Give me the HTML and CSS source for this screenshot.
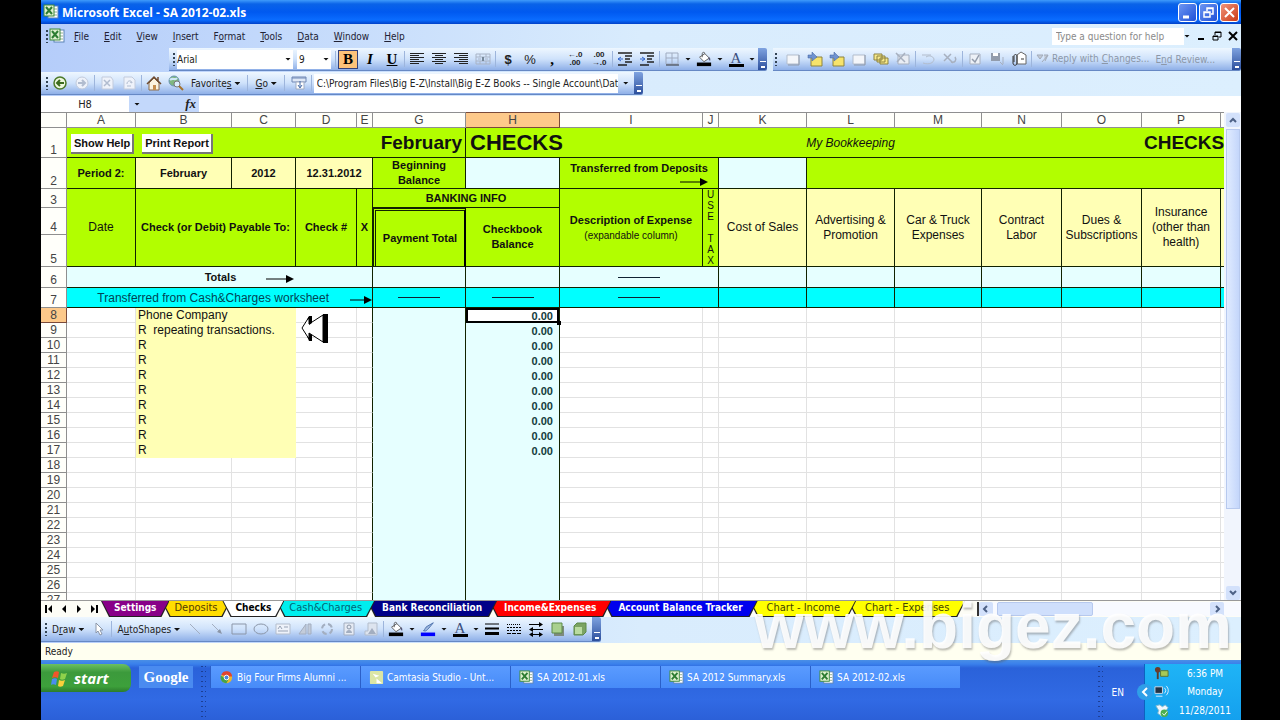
FILE: index.html
```html
<!DOCTYPE html>
<html lang="en">
  <head>
    <meta charset="utf-8" />
    <meta name="viewport" content="width=device-width, initial-scale=1.0" />
    <title>Microsoft Excel - SA 2012-02.xls</title>
    <link rel="stylesheet" href="styles.css">
  </head>
  <body>
    <svg class="symbols" aria-hidden="true">
      <symbol id="excel" viewBox="0 0 16 16">
        <rect x="5" y="2" width="10" height="12" fill="#fff" stroke="#5b83b5" />
        <path d="M11 5h3M11 8h3M11 11h3" stroke="#8fae8f" />
        <rect x="1" y="1" width="10" height="11" fill="#dff0cf" stroke="#3c8a3c" />
        <path d="M3 3l6 7M9 3l-6 7" stroke="#2d7d32" stroke-width="2" />
      </symbol>
      <symbol id="bucket" viewBox="0 0 18 16">
        <path d="M4 6l6-4 5 5-6 4z" fill="#fff" stroke="#555" />
        <path d="M7 6V2c0-2 3-2 3 0" fill="none" stroke="#555" />
        <path d="M14 6c3 1 2 3 2 4-1 0-2-2-2-4z" fill="#557" />
        <rect x="1" y="12" width="16" height="4" />
      </symbol>
      <symbol id="note" viewBox="0 0 16 16">
        <path d="M2 4h12v9H2z" fill="#f4f6fa" stroke="#b3bdcc" />
        <path d="M14 4v10H3" fill="none" stroke="#8f99aa" />
      </symbol>
      <symbol id="notes" viewBox="0 0 16 16">
        <path d="M4 6h11v9H4z" fill="#f7e36b" stroke="#8d8340" />
        <path d="M1 4h4V1l5 5-5 4V7H1z" fill="#6f92cf" stroke="#3c5f9f" stroke-width=".5" />
      </symbol>
    </svg>

    <div class="screen">
      <header class="titlebar">
        <svg class="icon"><use href="#excel" /></svg>
        <h1>Microsoft Excel - SA 2012-02.xls</h1>
        <button class="win" aria-label="Minimize"><svg viewBox="0 0 17 17"><path d="M4 13h6" stroke="#fff" stroke-width="3" /></svg></button>
        <button class="win" aria-label="Restore"><svg viewBox="0 0 17 17"><path d="M4 8h6v5H4zM4 8.500h6M7 7V4h6v6h-2M7 4.500h6" fill="none" stroke="#fff" stroke-width="1.500" /></svg></button>
        <button class="win close" aria-label="Close"><svg viewBox="0 0 17 17"><path d="M4 4l9 9M13 4l-9 9" stroke="#fff" stroke-width="2" /></svg></button>
      </header>

      <nav class="menubar">
        <i class="grip"></i>
        <svg class="icon"><use href="#excel" /></svg>
        <a href="#"><u>F</u>ile</a>
        <a href="#"><u>E</u>dit</a>
        <a href="#"><u>V</u>iew</a>
        <a href="#"><u>I</u>nsert</a>
        <a href="#">F<u>o</u>rmat</a>
        <a href="#"><u>T</u>ools</a>
        <a href="#"><u>D</u>ata</a>
        <a href="#"><u>W</u>indow</a>
        <a href="#"><u>H</u>elp</a>
        <input class="question" type="text" aria-label="Ask" placeholder="Type a question for help" />
        <i class="arrow"></i>
        <button class="mini" aria-label="Minimize workbook"><svg viewBox="0 0 10 10"><path d="M2 8h6" stroke="#000" stroke-width="2" /></svg></button>
        <button class="mini" aria-label="Restore workbook"><svg viewBox="0 0 10 10"><path d="M1 5h5v4H1zM1 5.500h5M3 4V1h6v5H7M3 1.500h6" fill="none" stroke="#000" /></svg></button>
        <button class="mini" aria-label="Close workbook"><svg viewBox="0 0 10 10"><path d="M1 1l8 8M9 1l-8 8" stroke="#000" stroke-width="2" /></svg></button>
      </nav>

      <div class="toolrow formatting">
        <div class="toolbar">
          <i class="grip"></i>
          <span class="combo font"><select aria-label="Font"><option>Arial</option></select></span>
          <span class="combo size"><select aria-label="Font size"><option>9</option></select></span>
          <i class="sep"></i>
          <button class="tool serif on"><b>B</b></button>
          <button class="tool serif"><b><i>I</i></b></button>
          <button class="tool serif"><b><u>U</u></b></button>
          <i class="sep"></i>
          <button class="tool lines" aria-label="Align left"><svg viewBox="0 0 16 16"><path d="M1 2h14M1 4h9M1 6h14M1 8h9M1 10h14M1 12h9" stroke="#222" /></svg></button>
          <button class="tool lines" aria-label="Center"><svg viewBox="0 0 16 16"><path d="M1 2h14M4 4h8M1 6h14M4 8h8M1 10h14M4 12h8" stroke="#222" /></svg></button>
          <button class="tool lines" aria-label="Align right"><svg viewBox="0 0 16 16"><path d="M1 2h14M6 4h9M1 6h14M6 8h9M1 10h14M6 12h9" stroke="#222" /></svg></button>
          <button class="tool" aria-label="Merge and center"><svg viewBox="0 0 16 16"><path d="M1 3h14v10H1zM1 6h14M1 10h14M5 3v3M11 3v3M5 10v3M11 10v3M3 8h3M10 8h3" fill="none" stroke="#a9b4c6" /><path d="M8 6v4" stroke="#789" stroke-width="2" /></svg></button>
          <i class="sep"></i>
          <button class="tool"><b>$</b></button>
          <button class="tool">%</button>
          <button class="tool serif"><b>,</b></button>
          <button class="tool dec">←.0<br />.00</button>
          <button class="tool dec">.00<br />→.0</button>
          <i class="sep"></i>
          <button class="tool" aria-label="Decrease indent"><svg viewBox="0 0 16 16"><path d="M1 2h14M8 5h7M8 8h5M8 11h7M1 14h9" stroke="#222" stroke-width="1.500" /><path d="M6 8H1M4 6L1 8l3 2" fill="none" stroke="#36c" /></svg></button>
          <button class="tool" aria-label="Increase indent"><svg viewBox="0 0 16 16"><path d="M1 2h14M8 5h7M8 8h5M8 11h7M1 14h9" stroke="#222" stroke-width="1.500" /><path d="M1 8h5M3 6l3 2-3 2" fill="none" stroke="#36c" /></svg></button>
          <i class="sep"></i>
          <button class="tool" aria-label="Borders"><svg viewBox="0 0 16 16"><path d="M2 2h12v11H2zM8 2v11M2 7h12" fill="none" stroke="#9fabc0" /><path d="M2 14h13" stroke="#333" /></svg></button>
          <i class="arrow"></i>
          <button class="tool" aria-label="Fill color"><svg><use href="#bucket" /></svg></button>
          <i class="arrow"></i>
          <button class="tool letter">A</button>
          <i class="arrow"></i>
          <i class="cap"></i>
        </div>
        <div class="toolbar reviewing">
          <i class="grip"></i>
          <button class="tool" aria-label="New comment"><svg><use href="#note" /></svg></button>
          <button class="tool" aria-label="Previous comment"><svg><use href="#notes" /></svg></button>
          <button class="tool" aria-label="Next comment"><svg><use href="#notes" /></svg></button>
          <button class="tool" aria-label="Show comment"><svg><use href="#note" /></svg></button>
          <button class="tool" aria-label="Show all comments"><svg viewBox="0 0 16 16"><path d="M1 3h8v6H1zM4 5h8v6H4zM7 7h8v6H7z" fill="#f7e98a" stroke="#8d8340" /></svg></button>
          <button class="tool" aria-label="Delete comment"><svg viewBox="0 0 16 16"><path d="M3 4h11v9H3z" fill="#e9edf4" stroke="#a7b0bf" /><path d="M1 2l9 9M10 2l-8 9" stroke="#a7b0bf" stroke-width="1.500" /></svg></button>
          <i class="sep"></i>
          <button class="tool" aria-label="Ink"><svg viewBox="0 0 16 16"><path d="M2 4h9M3 12c6 2 11 0 11-4-1-3-5-4-8-2" fill="none" stroke="#b3bdcc" /></svg></button>
          <button class="tool" aria-label="Erase ink"><svg viewBox="0 0 16 16"><path d="M2 3l9 9M9 3l-7 7M9 11c4 1 6-2 4-5" fill="none" stroke="#a7b0bf" stroke-width="1.500" /></svg></button>
          <i class="sep"></i>
          <button class="tool" aria-label="Create task"><svg viewBox="0 0 16 16"><path d="M3 3h10v10H3z" fill="#edf1f7" stroke="#a7b0bf" /><path d="M5 8l3 3 4-7" fill="none" stroke="#929cac" stroke-width="1.500" /></svg></button>
          <button class="tool" aria-label="Update file"><svg viewBox="0 0 16 16"><path d="M2 2h9v8H2z" fill="#929cac" /><path d="M4 2h5v3H4z" fill="#fff" /><path d="M14 6v7M11 11l3 3" stroke="#a7b0bf" /></svg></button>
          <button class="tool" aria-label="Send as attachment"><svg viewBox="0 0 16 16"><path d="M6 4l4-3 5 3v9H6z" fill="#fff" stroke="#666" /><path d="M2 5v7c0 3 4 3 4 0V5c0-2-3-2-3 0v6M10 8h3" fill="none" stroke="#333" /></svg></button>
          <i class="sep"></i>
          <button class="text" disabled><svg class="flag" viewBox="0 0 14 12"><path d="M1 2h6L4 6zM6 9l6-7M8 2h4l-3 6" fill="#c3cad6" stroke="#a2abb9" /></svg>Reply with <u>C</u>hanges...</button>
          <button class="text" disabled>E<u>n</u>d Review...</button>
          <i class="cap"></i>
        </div>
      </div>

      <div class="toolrow web">
        <div class="toolbar">
          <i class="grip"></i>
          <button class="tool" aria-label="Back"><svg viewBox="0 0 16 16"><circle cx="8" cy="8" r="6" fill="#eef8df" stroke="#4c7a2a" stroke-width="1.500" /><path d="M12 8H5M8 5L5 8l3 3" fill="none" stroke="#3b6b1d" stroke-width="2" /></svg></button>
          <button class="tool" aria-label="Forward"><svg viewBox="0 0 16 16"><circle cx="8" cy="8" r="6" fill="#eef2fa" stroke="#c2cbdc" /><path d="M4 8h7M8 5l3 3-3 3" fill="none" stroke="#b1bccf" stroke-width="2" /></svg></button>
          <i class="sep"></i>
          <button class="tool" aria-label="Stop"><svg viewBox="0 0 16 16"><path d="M3 2h9l2 3v9H3z" fill="#eef2fa" stroke="#c2cbdc" /><path d="M5 5l6 6M11 5l-6 6" stroke="#b1bccf" stroke-width="1.500" /></svg></button>
          <button class="tool" aria-label="Refresh"><svg viewBox="0 0 16 16"><path d="M3 2h8l3 3v9H3z" fill="#eef2fa" stroke="#c2cbdc" /><path d="M6 9c0-4 5-4 5-1M11 8l-2-1M10 11H6" fill="none" stroke="#b1bccf" /></svg></button>
          <i class="sep"></i>
          <button class="tool" aria-label="Home"><svg viewBox="0 0 16 16"><path d="M3 8v7h10V8L8 3z" fill="#fbf3df" stroke="#8a6a4a" /><path d="M1 9l7-7 7 7M12 2v4" fill="none" stroke="#6d4a2f" stroke-width="1.500" /><path d="M7 10h3v5H7z" fill="#c58e4e" /></svg></button>
          <button class="tool" aria-label="Search the web"><svg viewBox="0 0 16 16"><circle cx="6" cy="6" r="5" fill="#7fb77f" stroke="#6a95b5" /><path d="M2 5c3-3 5 1 7-2" stroke="#cfe8f7" fill="none" stroke-width="2" /><circle cx="9" cy="9" r="3" fill="#dbeeff" stroke="#777" /><path d="M11 11l4 4" stroke="#a5722d" stroke-width="2" /></svg></button>
          <button class="text">Favorite<u>s</u> <i class="arrow"></i></button>
          <i class="sep"></i>
          <button class="text"><u>G</u>o <i class="arrow"></i></button>
          <i class="sep"></i>
          <button class="tool" aria-label="Show only web toolbar"><svg viewBox="0 0 16 16"><path d="M1 2h14v5H1z" fill="#dfe8f6" stroke="#6f87b5" /><path d="M1 3h14" stroke="#6f87b5" /><path d="M5 7h8v7H5z" fill="#fff" stroke="#9fabc0" /><path d="M9 6v6M7 10l2 3 2-3" fill="none" stroke="#456ba8" /></svg></button>
          <i class="sep"></i>
          <input class="address" type="text" aria-label="Address" value="C:\Program Files\Big E-Z\Install\Big E-Z Books -- Single Account\Dat" />
          <i class="arrow"></i>
          <i class="cap"></i>
        </div>
      </div>

      <div class="formulabar">
        <input class="namebox" type="text" aria-label="Name box" value="H8" />
        <div class="fx"><i class="arrow"></i><em>fx</em></div>
        <input class="formula" type="text" aria-label="Formula" />
      </div>

      <main class="book">
        <div class="pane">
          <table class="sheet">
            <colgroup>
              <col class="w26" /><col class="w69" /><col class="w96" /><col class="w64" /><col class="w61" /><col class="w16" /><col class="w93" /><col class="w94" /><col class="w143" /><col class="w16" /><col class="w88" /><col class="w88" /><col class="w87" /><col class="w80" /><col class="w80" /><col class="w79" /><col class="w80" />
            </colgroup>
            <thead>
              <tr>
                <th></th><th>A</th><th>B</th><th>C</th><th>D</th><th>E</th><th>G</th><th class="current">H</th><th>I</th><th>J</th><th>K</th><th>L</th><th>M</th><th>N</th><th>O</th><th>P</th><th></th>
              </tr>
            </thead>
            <tbody id="rows">
              <tr class="r1 lime">
                <th>1</th>
                <td colspan="5" class="macros"><button>Show Help</button><button>Print Report</button></td>
                <td class="month edge">February</td>
                <td class="heading">CHECKS</td>
                <td></td>
                <td></td>
                <td colspan="3" class="company">My Bookkeeping</td>
                <td></td>
                <td></td>
                <td colspan="2" class="heading repeat">CHECKS</td>
              </tr>
              <tr class="r2 lime boxed">
                <th>2</th>
                <td><b>Period 2:</b></td>
                <td class="cream"><b>February</b></td>
                <td class="cream"><b>2012</b></td>
                <td colspan="2" class="cream"><b>12.31.2012</b></td>
                <td><b>Beginning<br />Balance</b></td>
                <td class="azure"></td>
                <td colspan="2" class="deposits"><b>Transferred from Deposits</b><svg class="pointer" viewBox="0 0 28 8"><path d="M0 4h21" stroke="#000" /><path d="M20 0l8 4-8 4z" /></svg></td>
                <td class="azure"></td>
                <td colspan="6"></td>
              </tr>
              <tr class="r3 lime boxed">
                <th>3</th>
                <td rowspan="3">Date</td>
                <td rowspan="3" colspan="2"><b>Check (or Debit) Payable To:</b></td>
                <td rowspan="3"><b>Check #</b></td>
                <td rowspan="3"><b>X</b></td>
                <td colspan="2"><b>BANKING INFO</b></td>
                <td rowspan="3"><b>Description of Expense</b><br /><small>(expandable column)</small></td>
                <td rowspan="3" class="usetax">U<br />S<br />E<br /><br />T<br />A<br />X</td>
                <td rowspan="3" class="cream">Cost of Sales</td>
                <td rowspan="3" class="cream">Advertising &amp;<br />Promotion</td>
                <td rowspan="3" class="cream">Car &amp; Truck<br />Expenses</td>
                <td rowspan="3" class="cream">Contract<br />Labor</td>
                <td rowspan="3" class="cream">Dues &amp;<br />Subscriptions</td>
                <td rowspan="3" class="cream">Insurance<br />(other than<br />health)</td>
                <td rowspan="3" class="cream"></td>
              </tr>
              <tr class="r4 lime boxed">
                <th>4</th>
                <td rowspan="2" class="double"><b>Payment Total</b></td>
                <td rowspan="2"><b>Checkbook<br />Balance</b></td>
              </tr>
              <tr class="r5">
                <th>5</th>
              </tr>
              <tr class="r6 azure boxed">
                <th>6</th>
                <td colspan="5" class="totals"><b>Totals</b><svg class="pointer" viewBox="0 0 28 8"><path d="M0 4h21" stroke="#000" /><path d="M20 0l8 4-8 4z" /></svg></td>
                <td></td>
                <td></td>
                <td colspan="2"><i class="dash"></i></td>
                <td></td><td></td><td></td><td></td><td></td><td></td><td></td>
              </tr>
              <tr class="r7 cyan boxed">
                <th>7</th>
                <td colspan="5" class="charges">Transferred from Cash&amp;Charges worksheet<svg class="pointer" viewBox="0 0 22 8"><path d="M0 4h15" stroke="#000" /><path d="M14 0l8 4-8 4z" /></svg></td>
                <td><i class="dash"></i></td>
                <td><i class="dash"></i></td>
                <td colspan="2"><i class="dash"></i></td>
                <td></td><td></td><td></td><td></td><td></td><td></td><td></td>
              </tr>
            </tbody>
          </table>
        </div>
        <div class="vscroll">
          <button aria-label="Scroll up"><svg viewBox="0 0 14 14"><path d="M4 9l3-3 3 3" fill="none" stroke="#4d6185" stroke-width="2" /></svg></button>
          <i class="thumb"></i>
          <button aria-label="Scroll down"><svg viewBox="0 0 14 14"><path d="M4 5l3 3 3-3" fill="none" stroke="#4d6185" stroke-width="2" /></svg></button>
        </div>
      </main>

      <div class="tabrow">
        <button class="step" aria-label="First sheet"><svg viewBox="0 0 10 8"><path d="M2 0v8" stroke="#000" stroke-width="2" /><path d="M8 0L4 4l4 4z" /></svg></button>
        <button class="step" aria-label="Previous sheet"><svg viewBox="0 0 10 8"><path d="M7 0L3 4l4 4z" /></svg></button>
        <button class="step" aria-label="Next sheet"><svg viewBox="0 0 10 8"><path d="M3 0l4 4-4 4z" /></svg></button>
        <button class="step" aria-label="Last sheet"><svg viewBox="0 0 10 8"><path d="M8 0v8" stroke="#000" stroke-width="2" /><path d="M2 0l4 4-4 4z" /></svg></button>
        <div class="tabs">
          <button class="tab purple"><span>Settings</span></button>
          <button class="tab gold"><span>Deposits</span></button>
          <button class="tab active"><span>Checks</span></button>
          <button class="tab aqua"><span>Cash&amp;Charges</span></button>
          <button class="tab navy"><span>Bank Reconciliation</span></button>
          <button class="tab red"><span>Income&amp;Expenses</span></button>
          <button class="tab blue"><span>Account Balance Tracker</span></button>
          <button class="tab yellow"><span>Chart - Income</span></button>
          <button class="tab yellow"><span>Chart - Expenses</span></button>
        </div>
        <div class="hscroll">
          <button aria-label="Scroll left"><svg viewBox="0 0 14 14"><path d="M8 4L5 7l3 3" fill="none" stroke="#4d6185" stroke-width="2" /></svg></button>
          <i class="thumb"></i>
          <button aria-label="Scroll right"><svg viewBox="0 0 14 14"><path d="M6 4l3 3-3 3" fill="none" stroke="#4d6185" stroke-width="2" /></svg></button>
        </div>
      </div>

      <div class="toolrow drawing">
        <div class="toolbar">
          <i class="grip"></i>
          <button class="text">D<u>r</u>aw <i class="arrow"></i></button>
          <button class="tool" aria-label="Select objects"><svg viewBox="0 0 16 16"><path d="M5 2v10l2-2 2 4 2-1-2-4h3z" fill="#fff" stroke="#8b96a8" /></svg></button>
          <i class="sep"></i>
          <button class="text">A<u>u</u>toShapes <i class="arrow"></i></button>
          <button class="tool" aria-label="Line"><svg viewBox="0 0 16 16"><path d="M3 3l10 10" stroke="#a3aec0" /></svg></button>
          <button class="tool" aria-label="Arrow"><svg viewBox="0 0 16 16"><path d="M3 3l8 8" stroke="#a3aec0" /><path d="M13 13l-5-2 3-3z" fill="#8b96a8" /></svg></button>
          <button class="tool" aria-label="Rectangle"><svg viewBox="0 0 16 16"><path d="M1 3h14v10H1z" fill="none" stroke="#8b96a8" /></svg></button>
          <button class="tool" aria-label="Oval"><svg viewBox="0 0 16 16"><ellipse cx="8" cy="8" rx="7" ry="5" fill="none" stroke="#8b96a8" /></svg></button>
          <button class="tool" aria-label="Text box"><svg viewBox="0 0 16 16"><path d="M1 3h14v10H1z" fill="#eef2fa" stroke="#b3bdcc" /><path d="M3 8l2-3 2 3M9 6h4M3 10h10" fill="none" stroke="#98a3b5" /></svg></button>
          <button class="tool" aria-label="WordArt"><svg viewBox="0 0 16 16"><path d="M2 13L9 3v10zM11 3h3v10h-3z" fill="#c3ccda" stroke="#a3aec0" /></svg></button>
          <button class="tool" aria-label="Diagram"><svg viewBox="0 0 16 16"><circle cx="8" cy="8" r="5" fill="none" stroke="#a3aec0" stroke-dasharray="5 3" stroke-width="2" /></svg></button>
          <button class="tool" aria-label="Clip art"><svg viewBox="0 0 16 16"><path d="M3 2h10v12H3z" fill="#e5eaf3" stroke="#a3aec0" /><circle cx="8" cy="6" r="2" fill="none" stroke="#8b96a8" /><path d="M5 12c0-4 6-4 6 0z" fill="#a3aec0" /></svg></button>
          <button class="tool" aria-label="Picture"><svg viewBox="0 0 16 16"><path d="M5 2h9v12H2v-4h3z" fill="#dde4ef" stroke="#b3bdcc" /><path d="M5 13l4-6 4 6z" fill="#a3aec0" /></svg></button>
          <i class="sep"></i>
          <button class="tool" aria-label="Fill color"><svg><use href="#bucket" /></svg></button>
          <i class="arrow"></i>
          <button class="tool" aria-label="Line color"><svg viewBox="0 0 18 16"><path d="M4 10c3 1 4-1 6-3l5-6-7 4c-2 1-2 3-4 5z" fill="#9eb6dd" stroke="#456ba8" /><rect x="1" y="12" width="16" height="4" fill="#00f" /></svg></button>
          <i class="arrow"></i>
          <button class="tool letter">A</button>
          <i class="arrow"></i>
          <button class="tool" aria-label="Line style"><svg viewBox="0 0 16 16"><path d="M1 3h14" stroke="#000" /><path d="M1 7.500h14" stroke="#000" stroke-width="2" /><path d="M1 12.500h14" stroke="#000" stroke-width="3" /></svg></button>
          <button class="tool" aria-label="Dash style"><svg viewBox="0 0 16 16"><path d="M1 3.500h14" stroke="#000" stroke-dasharray="1 1" /><path d="M1 6.500h14M1 9.500h14" stroke="#000" stroke-dasharray="2 1" /><path d="M1 12.500h14" stroke="#000" stroke-dasharray="4 1" /></svg></button>
          <button class="tool" aria-label="Arrow style"><svg viewBox="0 0 16 16"><path d="M1 3.500h12M2 8.500h13M2 13.500h12" stroke="#000" /><path d="M11 1l4 2.500L11 6zM5 6L1 8.500 5 11zM5 11l-4 2.500L5 16zM11 11l4 2.500-4 2.500z" /></svg></button>
          <button class="tool" aria-label="Shadow style"><svg viewBox="0 0 16 16"><path d="M4 5h10v10H4z" fill="#7d8a7d" /><path d="M2 2h10v10H2z" fill="#a9d08e" stroke="#5c8a48" /></svg></button>
          <button class="tool" aria-label="3-D style"><svg viewBox="0 0 16 16"><path d="M2 5l3-3h9v9l-3 3H2z" fill="#7ba363" stroke="#5c8a48" /><path d="M3 6h7v7H3z" fill="#b9dba0" /></svg></button>
          <i class="cap"></i>
        </div>
      </div>

      <div class="status">Ready</div>

      <footer class="taskbar">
        <button class="start">
          <svg viewBox="0 0 18 18"><path d="M3 3c2-1 4-1 5 0L7 9C5 8 3 8 1 9z" fill="#f0552b" /><path d="M10 4c2 1 4 1 6 0l-2 6c-2 1-4 1-5 0z" fill="#8fd14b" /><path d="M1 10c2-1 4-1 5 0l-1 6c-2-1-4-1-5 0z" fill="#4a8df0" /><path d="M8 11c2 1 4 1 6 0l-2 6c-2 1-4 1-5 0z" fill="#fbd03b" /></svg>start
        </button>
        <button class="google">Google</button>
        <i class="dots"></i>
        <div class="tasks">
          <button><svg viewBox="0 0 16 16"><circle cx="8" cy="8" r="6" fill="#e8b92f" /><path d="M2.500 5A6 6 0 0 1 14 7H8z" fill="#e0442f" /><path d="M2 6a6 6 0 0 0 6 8l2-4z" fill="#46a349" /><circle cx="8" cy="8" r="2.500" fill="#4b85e0" stroke="#fff" /></svg>Big Four Firms Alumni ...</button>
          <button><svg viewBox="0 0 16 16"><rect x="1" y="1" width="14" height="14" rx="1" fill="#dbe6a5" /><path d="M4 4l7 2-4 2zM8 9l6 5H8z" fill="#fff" /></svg>Camtasia Studio - Unt...</button>
          <button><svg><use href="#excel" /></svg>SA 2012-01.xls</button>
          <button><svg><use href="#excel" /></svg>SA 2012 Summary.xls</button>
          <button><svg><use href="#excel" /></svg>SA 2012-02.xls</button>
        </div>
        <i class="dots"></i>
        <span class="lang">EN</span>
        <div class="tray">
          <button class="expand" aria-label="Show hidden icons"><svg viewBox="0 0 16 16"><circle cx="8" cy="8" r="8" fill="#2f9fe8" /><path d="M10 4L6 8l4 4" fill="none" stroke="#fff" stroke-width="2" /></svg></button>
          <div><svg viewBox="0 0 16 16"><path d="M4 4v10" stroke="#5a3a2a" stroke-width="2" /><circle cx="4" cy="4" r="3" fill="#6b3b2b" /><path d="M7 5h8v6H7z" fill="#a7c957" stroke="#5b7330" /></svg><span>6:36 PM</span></div>
          <div><svg viewBox="0 0 16 16"><path d="M1 3h8v7H1z" fill="#234" stroke="#cde" /><path d="M2 13h7M11 4c2 2 2 4 0 6M13 2c3 3 3 7 0 10" fill="none" stroke="#def" /></svg><span>Monday</span></div>
          <div><svg viewBox="0 0 16 16"><path d="M2 3l4-1 3 2 3-2 3 3-2 3 1 3-6 3-4-3 1-3z" fill="#eef7ff" stroke="#8bc" /><circle cx="11" cy="11" r="4" fill="#4caf50" /><path d="M9 11l2 2 3-4" fill="none" stroke="#fff" /></svg><span>11/28/2011</span></div>
        </div>
      </footer>

      <div class="watermark">www.bigez.com</div>
    </div>
    <script src="script.js"></script>
  </body>
</html>
```
FILE: styles.css
```css
* {
  box-sizing: border-box;
}

body {
  margin: 0;
  background: #000;
  font-family: "DejaVu Sans Condensed", "DejaVu Sans", sans-serif;
  font-size: 10px;
  color: #222;
}

button,
input,
select {
  font: inherit;
  color: inherit;
  border: 0;
  padding: 0;
  margin: 0;
  background: none;
  border-radius: 0;
  min-width: 0;
}

svg {
  display: block;
  flex: none;
}

.symbols {
  position: absolute;
  width: 0;
  height: 0;
}

.icon {
  width: 16px;
  height: 16px;
}

.screen {
  position: relative;
  display: flex;
  flex-direction: column;
  height: 100vh;
  margin: 0 39px 0 41px;
  overflow: hidden;
  background: #fff;
}

/* title and menu */
.titlebar {
  display: flex;
  align-items: center;
  gap: 2px;
  flex: none;
  height: 24px;
  padding: 0 2px;
  background: linear-gradient(#3f9bfb 0, #0a63e8 4px, #0059f0 12px, #0a6cff 20px, #0040c8 24px);
  color: #fff;
}

.titlebar h1 {
  flex: 1;
  margin: 0 0 0 1px;
  font-family: "Open Sans", sans-serif;
  font-size: 12px;
  font-weight: 700;
}

.win {
  width: 19px;
  height: 19px;
  border: 1px solid #fff;
  border-radius: 3px;
  background: linear-gradient(135deg, #6d96f2, #1f50d8);
}

.win.close {
  background: linear-gradient(135deg, #f0937a, #cc3a14);
}

.menubar {
  display: flex;
  align-items: center;
  flex: none;
  height: 24px;
  padding: 0 3px 0 5px;
  background: linear-gradient(90deg, #b5cdfa, #d9ecfd 50%, #dceffe);
}

.menubar a {
  margin-right: 15px;
  color: #223;
  text-decoration: none;
}

.menubar .icon {
  margin: 0 9px 0 1px;
}

.question {
  width: 132px;
  height: 17px;
  margin-left: auto;
  padding-left: 4px;
  background: #fff;
}

.question::placeholder {
  color: #8a8a8a;
}

.mini {
  width: 10px;
  height: 10px;
  margin-left: 6px;
}

.grip {
  width: 2px;
  height: 13px;
  flex: none;
  background: repeating-linear-gradient(#345 0 2px, transparent 2px 4px);
}

.arrow {
  display: inline-block;
  flex: none;
  width: 6px;
  height: 3px;
  background: #111;
  clip-path: polygon(0 0, 100% 0, 50% 100%);
  vertical-align: middle;
}

/* toolbars */
.toolrow {
  display: flex;
  flex: none;
  gap: 6px;
  height: 24px;
  padding-bottom: 1px;
  background: linear-gradient(90deg, #b5cdfa, #d9ecfd 50%, #dceffe);
}

.formatting {
  padding-left: 128px;
}

.toolbar {
  display: flex;
  align-items: center;
  gap: 2px;
  padding-left: 4px;
  background: linear-gradient(#eef7ff, #cfe2fb 50%, #8fb0e8);
  border-bottom: 1px solid #6688c4;
  border-radius: 0 2px 2px 0;
}

.reviewing {
  flex: 1;
  padding-left: 2px;
}

.reviewing .grip {
  margin-right: 4px;
}

.reviewing .cap,
.drawing .cap {
  margin-left: auto;
}

.tool {
  display: flex;
  align-items: center;
  justify-content: center;
  flex: none;
  width: 20px;
  height: 19px;
  font-family: "Liberation Sans", sans-serif;
  font-size: 13px;
}

.tool svg {
  width: 16px;
  height: 16px;
}

.lines svg {
  shape-rendering: crispEdges;
}

.serif {
  font-family: "Liberation Serif", serif;
  font-size: 15px;
  color: #000;
}

.on {
  background: #fdc279;
  border: 1px solid #33407a;
}

.dec {
  width: 22px;
  font-size: 8px;
  line-height: 8px;
  font-weight: 700;
}

.letter {
  height: 15px;
  font-family: "Liberation Serif", serif;
  font-size: 15px;
  line-height: 12px;
  color: #3c4f7d;
  background: linear-gradient(#000, #000) 50% 100% / 15px 3px no-repeat;
  align-items: flex-start;
}

.toolbar > .arrow {
  margin: 0 1px;
}

.text {
  padding: 0 2px;
  white-space: nowrap;
}

.web .text,
.drawing .text {
  padding: 0 3px;
}

.text:disabled {
  color: #8c97a8;
}

.flag {
  display: inline-block;
  width: 14px;
  height: 12px;
  margin-right: 2px;
  vertical-align: middle;
}

.sep {
  flex: none;
  width: 1px;
  height: 16px;
  background: #9db5dc;
}

.text + .sep {
  margin: 0 2px;
}

.cap {
  position: relative;
  align-self: stretch;
  width: 9px;
  flex: none;
  background: linear-gradient(#7fa3e0, #2c4f9c);
  border-radius: 0 2px 2px 0;
}

.cap::after {
  content: "";
  position: absolute;
  left: 2px;
  bottom: 2px;
  width: 6px;
  height: 6px;
  border-top: 1px solid #fff;
  background: linear-gradient(#fff, #fff) 50% 100% / 4px 2px no-repeat;
}

.combo {
  display: flex;
  align-items: center;
  height: 19px;
  padding-right: 2px;
  background: #fff;
}

.combo::after {
  content: "";
  width: 6px;
  height: 3px;
  background: #111;
  clip-path: polygon(0 0, 100% 0, 50% 100%);
}

.combo select {
  appearance: none;
  flex: 1;
}

.font {
  width: 116px;
}

.size {
  width: 34px;
  margin: 0 2px;
  padding-left: 2px;
}

.web .toolbar {
  padding-left: 5px;
}

.address {
  width: 304px;
  height: 19px;
  padding-left: 3px;
  background: #fff;
}

.toolbar > .address + .arrow {
  margin: 0 3px;
}

.formulabar {
  display: flex;
  flex: none;
  height: 16px;
}

.namebox {
  width: 88px;
  text-align: center;
  font-size: 11px;
  background: #fff;
}

.fx {
  display: flex;
  align-items: center;
  justify-content: space-between;
  width: 70px;
  padding: 0 3px 0 5px;
  background: #c3d8fb;
}

.fx em {
  font: italic 700 13px "Liberation Serif", serif;
}

.formula {
  flex: 1;
}

/* worksheet */
.book {
  display: flex;
  flex: 1;
  min-height: 0;
}

.pane {
  flex: 1;
  min-width: 0;
  overflow: hidden;
}

.vscroll {
  display: flex;
  flex-direction: column;
  flex: none;
  width: 17px;
  padding: 1px 1px 0 2px;
  background: #f1f5fd;
}

.vscroll button,
.hscroll button {
  width: 14px;
  height: 14px;
  background: #d3e1fb;
  border-radius: 2px;
}

.vscroll .thumb {
  flex: 0 1 78%;
  margin: 2px 0 auto;
  background: linear-gradient(90deg, #e0ebff, #c4d6fb);
  border: 1px solid #b7c9ee;
}

.sheet {
  table-layout: fixed;
  width: 1260px;
  border-collapse: separate;
  border-spacing: 0;
  font-family: "Liberation Sans", sans-serif;
  font-size: 12px;
  line-height: 14px;
  color: #111;
}

.sheet b {
  font-size: 11px;
}

.w16 { width: 16px; }
.w26 { width: 26px; }
.w61 { width: 61px; }
.w64 { width: 64px; }
.w69 { width: 69px; }
.w79 { width: 79px; }
.w80 { width: 80px; }
.w87 { width: 87px; }
.w88 { width: 88px; }
.w93 { width: 93px; }
.w94 { width: 94px; }
.w96 { width: 96px; }
.w143 { width: 143px; }

.sheet th,
.sheet td {
  height: 15px;
  padding: 0;
  border-right: 1px solid #e2e2e2;
  border-bottom: 1px solid #e2e2e2;
  text-align: center;
  white-space: nowrap;
}

.sheet th {
  border-color: #8f8f8f;
  background: #fffffa;
  font-weight: 400;
  color: #444;
  vertical-align: bottom;
}

.sheet thead th {
  height: 16px;
  border-top: 1px solid #8f8f8f;
}

.sheet .current {
  background: #fdc98a;
  border-color: #7a4a3a;
}

.sheet .lime td {
  background: #b2fe00;
}

.sheet .azure td,
.sheet td.azure {
  background: #e6ffff;
}

.sheet .cyan td {
  background: #0ff;
  color: #045;
}

.sheet td.cream {
  background: #ffffb5;
}

.sheet .boxed td {
  border-color: #112200;
}

.sheet .r1 th { height: 30px; }
.sheet .r2 th { height: 31px; }
.sheet .r3 th { height: 19px; }
.sheet .r4 th { height: 27px; }
.sheet .r5 th { height: 32px; }
.sheet .r6 th { height: 21px; }
.sheet .r7 th { height: 20px; }

.sheet .r1 td {
  border-right-width: 0;
  border-bottom-color: #112200;
}

.sheet .r1 td.edge {
  border-right: 1px solid #112200;
}

.sheet .r2 td,
.sheet .r3 td,
.sheet .r4 td {
  line-height: 15px;
}

.sheet td.macros {
  text-align: left;
}

.macros button {
  height: 20px;
  margin: 3px 4px 0 4px;
  padding: 0 2px 0 3px;
  border-right: 2px solid #777;
  border-bottom: 2px solid #777;
  background: #fff;
  font-size: 11px;
  font-weight: 700;
}

.sheet td.month {
  padding-right: 3px;
  font-size: 19px;
  font-weight: 700;
  line-height: 22px;
  text-align: right;
}

.sheet td.heading {
  padding-left: 4px;
  font-size: 22px;
  font-weight: 700;
  line-height: 22px;
  text-align: left;
}

.sheet td.repeat {
  padding-left: 2px;
  font-size: 19px;
}

.company {
  font-style: italic;
}

.pointer {
  width: 28px;
  height: 8px;
}

.deposits .pointer {
  margin: 2px 10px 0 auto;
}

.totals .pointer,
.charges .pointer {
  display: inline-block;
  margin-left: 30px;
  vertical-align: -2px;
}

.sheet td.totals {
  padding-left: 60px;
}

.sheet td.charges {
  text-align: right;
}

.charges .pointer {
  width: 22px;
  margin-left: 21px;
}

.sheet small {
  font-size: 10px;
}

.sheet .r3 td.usetax {
  font-size: 10px;
  line-height: 11px;
}

.sheet .boxed td.double {
  border-top: 3px double #112200;
  border-left: 3px double #112200;
  border-right: 2px solid #000;
}

.dash {
  display: block;
  width: 42px;
  height: 1px;
  margin: 0 auto;
  background: #123;
}

.sheet td.payee {
  padding-left: 2px;
  background: #ffffb5;
  border-color: #ffffb5;
  text-align: left;
}

.sheet td.line {
  border-right-color: #112200;
}

.sheet td.bank {
  background: #e6ffff;
  border-right-color: #112200;
  border-bottom: 0;
}

.sheet td.balance {
  padding-right: 6px;
  font-size: 11px;
  font-weight: 700;
  text-align: right;
  color: #143c3c;
}

.sheet td.selected {
  position: relative;
  background: #fff;
  box-shadow: inset 0 0 0 2px #000;
}

.selected::after {
  content: "";
  position: absolute;
  right: -2px;
  bottom: -2px;
  width: 4px;
  height: 4px;
  background: #000;
}

.sheet td.marked {
  position: relative;
}

.cursor {
  position: absolute;
  left: 5px;
  top: 6px;
  width: 28px;
  height: 29px;
}

/* sheet tabs */
.tabrow {
  display: flex;
  align-items: center;
  flex: none;
  height: 17px;
  background: #fdfdf6;
  border-top: 1px solid #999;
}

.step {
  width: 15px;
  height: 14px;
}

.step svg {
  width: 10px;
  height: 8px;
  margin: 0 auto;
}

.tabs {
  display: flex;
  flex: 1;
  align-self: stretch;
  min-width: 0;
  overflow: hidden;
  font-size: 11px;
}

.tab {
  position: relative;
  flex: none;
  height: 16px;
  margin-right: -8px;
  padding: 0 1px 1px;
  background: #222;
  clip-path: polygon(0 0, 100% 0, calc(100% - 8px) 100%, 8px 100%);
}

.tab span {
  display: block;
  height: 15px;
  padding: 0 12px;
  line-height: 14px;
  clip-path: polygon(0 0, 100% 0, calc(100% - 8px) 100%, 8px 100%);
}

.tab:nth-child(n + 5) span {
  padding: 0 14px;
}

.tab.yellow span {
  padding: 0 15px 0 16px;
}

.tab:nth-child(1) { z-index: 9; }
.tab:nth-child(2) { z-index: 8; }
.tab:nth-child(3) { z-index: 10; }
.tab:nth-child(4) { z-index: 7; }
.tab:nth-child(5) { z-index: 6; }
.tab:nth-child(6) { z-index: 5; }
.tab:nth-child(7) { z-index: 4; }
.tab:nth-child(8) { z-index: 3; }
.tab:nth-child(9) { z-index: 2; }

.purple,
.active,
.navy,
.red,
.blue {
  font-size: 10px;
  font-weight: 700;
}

.purple span { background: #808; color: #fff; }
.gold span { background: #fd0; color: #553c00; }
.active span { background: #fff; color: #000; }
.aqua span { background: #0ee; color: #067; }
.navy span { background: #008; color: #fff; }
.red span { background: #f00; color: #fff; }
.blue span { background: #00e; color: #fff; }
.yellow span { background: #ff0; color: #440; }

.hscroll {
  display: flex;
  flex: none;
  width: 22%;
  padding-right: 17px;
  border-left: 2px solid #333;
  background: #f8faff;
}

.hscroll .thumb {
  flex: 0 1 96px;
  margin: 0 auto 0 4px;
  border: 1px solid #b7c9ee;
  border-radius: 2px;
  background: #cfdffc;
}

.drawing {
  height: 26px;
}

.status {
  flex: none;
  height: 17px;
  padding-left: 4px;
  line-height: 18px;
  background: #fffff0;
}

/* taskbar */
.taskbar {
  display: flex;
  align-items: flex-start;
  flex: none;
  height: 60px;
  padding-top: 4px;
  background: linear-gradient(#4a8fe6 0, #3a80ec 4px, #2a62da 8px, #316ae4 40px, #2b60d8);
  color: #fff;
}

.start {
  display: flex;
  align-items: center;
  gap: 5px;
  width: 90px;
  height: 28px;
  padding-left: 10px;
  border-radius: 0 8px 8px 0;
  background: linear-gradient(#6cc062, #3c9a3c 30%, #3da03b 80%, #2c7c2c);
  font: italic 700 15px "Open Sans", sans-serif;
}

.start svg {
  width: 18px;
  height: 18px;
}

.google {
  width: 54px;
  height: 22px;
  margin: 2px 7px 0 8px;
  background: #4a8bf0;
  font: 700 15px "Liberation Serif", serif;
}

.dots {
  align-self: stretch;
  width: 6px;
  background: radial-gradient(circle, #1c3f94 1px, transparent 1px) 0 0 / 4px 5px;
}

.tasks {
  display: flex;
  flex: 0 1 750px;
  min-width: 0;
  margin: 2px auto 0 4px;
}

.tasks button {
  display: flex;
  align-items: center;
  flex: 1;
  gap: 3px;
  height: 22px;
  padding-left: 8px;
  border-left: 1px solid #2b5fc8;
  background: linear-gradient(#5a9bff, #478bf8);
  white-space: nowrap;
}

.tasks svg {
  width: 15px;
  height: 15px;
}

.lang {
  align-self: center;
  margin: 0 20px 0 9px;
}

.tray {
  position: relative;
  align-self: stretch;
  display: flex;
  flex-direction: column;
  justify-content: space-around;
  width: 97px;
  padding-left: 9px;
  border-left: 1px solid #0d62c0;
  background: linear-gradient(#1fb4f6, #14a0ee);
}

.tray div {
  display: flex;
  align-items: center;
}

.tray div svg {
  width: 15px;
  height: 15px;
}

.tray span {
  flex: 1;
  text-align: center;
}

.expand {
  position: absolute;
  left: -8px;
  top: 20px;
}

.expand svg {
  width: 16px;
  height: 16px;
}

.watermark {
  position: absolute;
  right: 9px;
  bottom: 58px;
  z-index: 20;
  font: 700 64px/72px "Liberation Sans", sans-serif;
  color: rgba(255, 255, 255, 0.9);
  text-shadow: 1px 2px 2px rgba(90, 90, 90, 0.4);
  pointer-events: none;
}
```
FILE: script.js
```js
// rows 8 to 27 of the sheet, columns A to Q (F is hidden)
var payees = {
  8: "Phone Company",
  9: "R&nbsp; repeating transactions."
};
var cursor = '<svg class="cursor" viewBox="0 0 28 29">' +
  '<path d="M1 14L8 3v7L22 1v27L8 19v6z" fill="#fff" stroke="#000"/>' +
  '<path d="M22 0h5v29h-5zM6 6l2-4h3v7l-3 2V5zM6 22l2 5h3v-6l-3-2v5z"/></svg>';
var body = document.getElementById("rows");

for (var n = 8; n <= 27; n++) {
  var filled = n <= 17;
  var html = '<th class="' + (n === 8 ? "current" : "") + '">' + n + "</th><td></td>";
  html += filled
    ? '<td class="payee" colspan="2">' + (payees[n] || "R") + "</td>"
    : "<td></td><td></td>";
  html += n === 8 ? '<td class="marked">' + cursor + "</td>" : "<td></td>";
  html += '<td class="line"></td><td class="bank"></td>';
  html += '<td class="bank balance' + (n === 8 ? " selected" : "") + '">' + (filled ? "0.00" : "") + "</td>";
  for (var c = 0; c < 9; c++) {
    html += "<td></td>";
  }
  var row = document.createElement("tr");
  row.innerHTML = html;
  body.appendChild(row);
}
```
